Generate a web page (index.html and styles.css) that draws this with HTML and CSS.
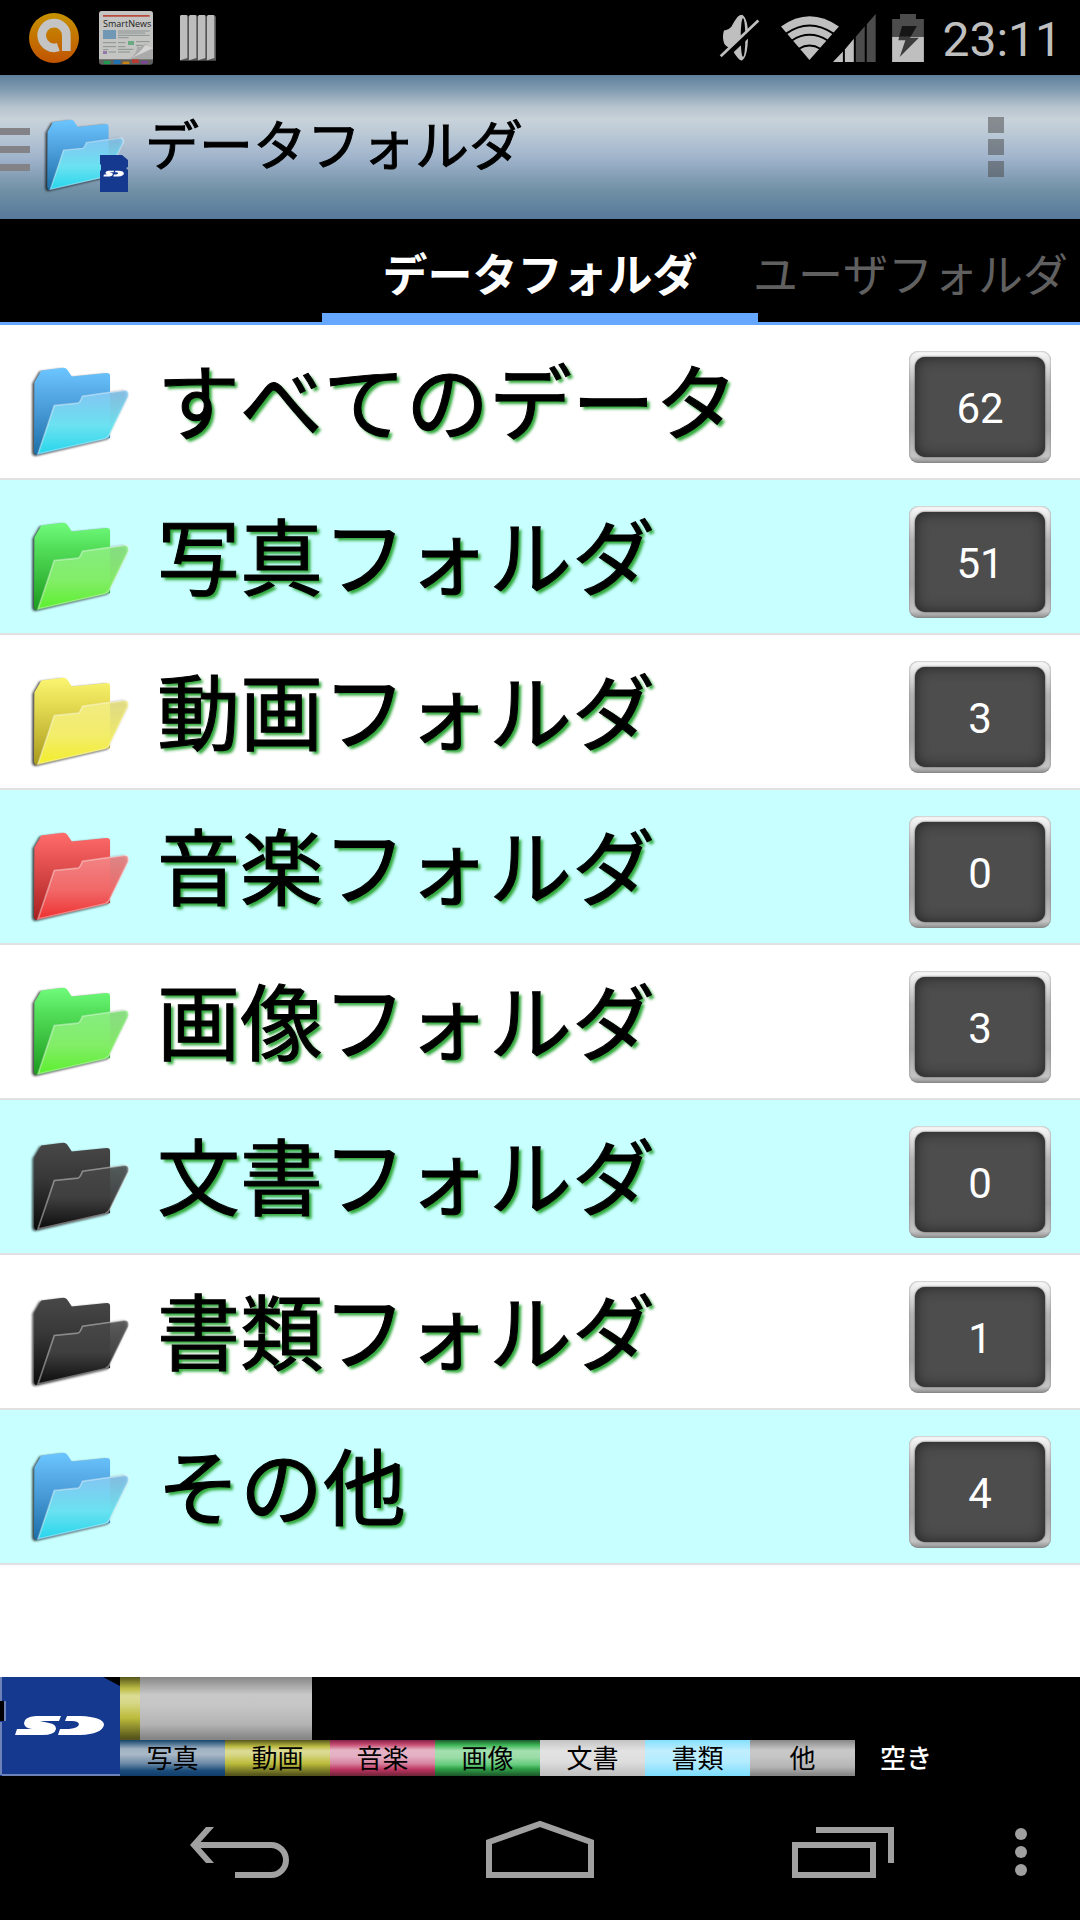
FILE: index.html
```html
<!DOCTYPE html>
<html lang="ja">
<head>
  <meta charset="UTF-8" />
  <meta name="viewport" content="width=device-width" />
  <title>データフォルダ</title>
  <link rel="stylesheet" href="styles.css">
</head>
<body>

<!-- shared shapes -->
<svg class="defs" aria-hidden="true">
  <defs>
    <linearGradient id="blueBack" x2="0" y2="1"><stop offset="0" stop-color="#6cc6ff"/><stop offset=".3" stop-color="#56aae6"/><stop offset="1" stop-color="#1d6fa8"/></linearGradient>
    <linearGradient id="blueFront" x2="0" y2="1"><stop offset="0" stop-color="#8ccaf5" stop-opacity=".85"/><stop offset=".55" stop-color="#6ee6f3" stop-opacity=".95"/><stop offset="1" stop-color="#26d6ec"/></linearGradient>
    <linearGradient id="greenBack" x2="0" y2="1"><stop offset="0" stop-color="#70fb7c"/><stop offset=".3" stop-color="#52dd58"/><stop offset="1" stop-color="#1c9a1e"/></linearGradient>
    <linearGradient id="greenFront" x2="0" y2="1"><stop offset="0" stop-color="#90f088" stop-opacity=".85"/><stop offset=".55" stop-color="#86f06a" stop-opacity=".95"/><stop offset="1" stop-color="#5cf02e"/></linearGradient>
    <linearGradient id="yellowBack" x2="0" y2="1"><stop offset="0" stop-color="#fbf570"/><stop offset=".3" stop-color="#e6dc54"/><stop offset="1" stop-color="#a89a1c"/></linearGradient>
    <linearGradient id="yellowFront" x2="0" y2="1"><stop offset="0" stop-color="#f4ee8c" stop-opacity=".85"/><stop offset=".55" stop-color="#f5f06c" stop-opacity=".95"/><stop offset="1" stop-color="#f3ee2c"/></linearGradient>
    <linearGradient id="redBack" x2="0" y2="1"><stop offset="0" stop-color="#ff6c6c"/><stop offset=".3" stop-color="#e85454"/><stop offset="1" stop-color="#a81f1f"/></linearGradient>
    <linearGradient id="redFront" x2="0" y2="1"><stop offset="0" stop-color="#f58c8c" stop-opacity=".85"/><stop offset=".55" stop-color="#f46a6a" stop-opacity=".95"/><stop offset="1" stop-color="#ee3030"/></linearGradient>
    <linearGradient id="blackBack" x2="0" y2="1"><stop offset="0" stop-color="#484848"/><stop offset=".4" stop-color="#383838"/><stop offset="1" stop-color="#0a0a0a"/></linearGradient>
    <linearGradient id="blackFront" x2="0" y2="1"><stop offset="0" stop-color="#4c4c4c" stop-opacity=".7"/><stop offset=".5" stop-color="#424242" stop-opacity=".9"/><stop offset="1" stop-color="#0c0c0c"/></linearGradient>
    <linearGradient id="avast" x2="0" y2="1"><stop offset="0" stop-color="#c69200"/><stop offset="1" stop-color="#c15300"/></linearGradient>
    <path id="back" d="M103 158L124 122L190 113Q200 113 204 122L216 140L322 129Q331 129 331 138V325L112 376Q101 376 102 360Z"/>
    <path id="front" stroke="#fff" stroke-opacity=".4" stroke-width="5" d="M114 373L163 227L234 220Q240 219 248 199L374 181Q390 180 386 200L330 314Q326 324 316 327Z"/>
    <path id="sdLogo" fill="#fff" d="M61 39H36Q24 40 24 46Q24 51 32 52H17L15 58H42Q55 58 56 52Q56 47 49 46L40 44H59ZM67 39H80Q104 40 104 48Q102 57 80 58H58L60 52H69Q79 51 79 47Q78 44 72 44H65Z"/>
  </defs>
</svg>

<div class="status">
  <svg class="avast" viewBox="87 39 150 150"><circle cx="162" cy="114" r="75" fill="url(#avast)"/><path d="M175 141A37 37 0 1 1 199 110V153" fill="none" stroke="#c4c4c4" stroke-width="26"/></svg>
  <svg class="news" viewBox="297 33 162 162">
    <rect x="297" y="33" width="162" height="161" rx="9" fill="#606060"/>
    <path d="M297 178V42Q297 33 306 33H450Q459 33 459 42V178Z" fill="#c4c4c2"/>
    <path d="M309 45H449V50H309Z" fill="#b84a3c"/>
    <text x="309" y="80" class="newsname">SmartNews</text>
    <path d="M309 90H348V117H309Z" fill="#7097b4"/>
    <path d="M354 93H449M354 99H436M354 106H449M354 113H386M309 128H348M354 128H376M408 125H449M309 140H348M354 140H376M408 136H430M354 148H400M309 149H325M326 156H348M354 156H390" stroke="#8a9492" stroke-width="3"/>
    <path d="M384 123H402V135H384Z" fill="#67aa84"/><path d="M309 153H321V162H309Z" fill="#9478a8"/>
    <path d="M388 177Q412 160 412 137Q422 147 436 131L459 148V177Z" fill="#aaa"/><path d="M388 177L459 145L436 134Q420 160 388 177Z" fill="#d4d4d4"/>
    <path d="M311 183h20v9h-20z" fill="#1e9a4c"/><path d="M341 180h20v12h-20z" fill="#2072b0"/><path d="M368 185h20v7h-20z" fill="#c98410"/><path d="M396 178h20v11h-20z" fill="#b83a30"/><path d="M423 183h20v8h-20z" fill="#7d4596"/>
  </svg>
  <svg class="bars" viewBox="540 45 108 138"><path d="M540 50l4-5h18l5 5v132h-27zM567 50l4-5h18l5 5v132h-27zM594 50l4-5h18l5 5v132h-27zM621 50l4-5h18l5 5v132h-27z" fill="#555"/><path d="M540 48l3-3h16l3 3v126l-22 7zM567 48l3-3h16l3 3v126l-22 7zM594 48l3-3h16l3 3v126l-22 7zM621 48l3-3h16l3 3v126l-22 7z" fill="#bdbdbd"/></svg>
  <span class="space"></span>
  <svg class="mute" viewBox="57 42 123 140"><path d="M73 90Q84 92 94 80Q103 62 113 50Q119 44 126 44Q145 55 144 112Q143 170 126 181Q117 183 98 151L78 137Q70 130 69 112Q69 95 73 90Z" fill="#bfbfbf"/><ellipse cx="129" cy="112" rx="7" ry="58" fill="#000"/><path d="M66 178L182 68" stroke="#000" stroke-width="16"/><path d="M78 141L98 151L80 170L62 160Z" fill="#000"/><path d="M62 168L175 61" stroke="#bfbfbf" stroke-width="8"/></svg>
  <svg class="signal" viewBox="240 36 288 145">
    <path d="M242 74Q328 12 417 74L328 175Z" fill="#bfbfbf"/>
    <path d="M256 96Q328 45 402 96M275 116Q328 82 383 116M296 141Q328 121 361 141" fill="none" stroke="#000" stroke-width="6"/>
    <path d="M399 181L429 149V181ZM435 143L462 111V181H435Z" fill="#bfbfbf"/><path d="M468 105L495 73V181H468ZM501 67L528 36V181H501Z" fill="#4c4c4c"/>
  </svg>
  <svg class="battery" viewBox="576 36 96 145"><path d="M576 51H600V36H648V51H672V105H576Z" fill="#4c4c4c"/><path d="M576 105H672V181H576Z" fill="#bfbfbf"/><path d="M606 72H651L632 105H597Z" fill="#161616"/><path d="M597 105L595 115H616L599 166L657 108H630L632 105Z" fill="#3c3c3c"/></svg>
  <time class="clock">23:11</time>
</div>

<header class="bar">
  <button class="drawer" aria-label="メニュー"><i></i><i></i><i></i></button>
  <div class="logo">
    <svg class="folder" viewBox="90 70 310 320"><use href="#back" fill="url(#blueBack)"/><use href="#front" fill="url(#blueFront)"/></svg>
    <svg class="sdbadge" viewBox="0 0 28 37"><path d="M0 0H22L28 5V12L26 13L28 15V37H0V16L1 15V10L0 9Z" fill="#15398f"/><use href="#sdLogo" transform="translate(0 4) scale(.23 .3)"/></svg>
  </div>
  <h1>データフォルダ</h1>
  <button class="more" aria-label="その他のオプション"><i></i><i></i><i></i></button>
</header>

<nav class="tabs">
  <a class="tab active" href="#data">データフォルダ</a>
  <a class="tab next" href="#user">ユーザフォルダ</a>
</nav>

<main id="data">
  <ul class="list">
    <li><a href="#all"><svg class="folder" viewBox="90 70 310 320"><use href="#back" fill="url(#blueBack)"/><use href="#front" fill="url(#blueFront)"/></svg><span class="name">すべてのデータ</span><span class="count"><b>62</b></span></a></li>
    <li><a href="#photo"><svg class="folder" viewBox="90 70 310 320"><use href="#back" fill="url(#greenBack)"/><use href="#front" fill="url(#greenFront)"/></svg><span class="name">写真フォルダ</span><span class="count"><b>51</b></span></a></li>
    <li><a href="#movie"><svg class="folder" viewBox="90 70 310 320"><use href="#back" fill="url(#yellowBack)"/><use href="#front" fill="url(#yellowFront)"/></svg><span class="name">動画フォルダ</span><span class="count"><b>3</b></span></a></li>
    <li><a href="#music"><svg class="folder" viewBox="90 70 310 320"><use href="#back" fill="url(#redBack)"/><use href="#front" fill="url(#redFront)"/></svg><span class="name">音楽フォルダ</span><span class="count"><b>0</b></span></a></li>
    <li><a href="#image"><svg class="folder" viewBox="90 70 310 320"><use href="#back" fill="url(#greenBack)"/><use href="#front" fill="url(#greenFront)"/></svg><span class="name">画像フォルダ</span><span class="count"><b>3</b></span></a></li>
    <li><a href="#text"><svg class="folder" viewBox="90 70 310 320"><use href="#back" fill="url(#blackBack)"/><use href="#front" fill="url(#blackFront)"/></svg><span class="name">文書フォルダ</span><span class="count"><b>0</b></span></a></li>
    <li><a href="#docs"><svg class="folder" viewBox="90 70 310 320"><use href="#back" fill="url(#blackBack)"/><use href="#front" fill="url(#blackFront)"/></svg><span class="name">書類フォルダ</span><span class="count"><b>1</b></span></a></li>
    <li><a href="#other"><svg class="folder" viewBox="90 70 310 320"><use href="#back" fill="url(#blueBack)"/><use href="#front" fill="url(#blueFront)"/></svg><span class="name">その他</span><span class="count"><b>4</b></span></a></li>
  </ul>
</main>

<footer class="storage">
  <svg class="sdcard" viewBox="0 0 120 99"><path d="M0 0H103L120 9V99H0V44H4V24H0Z" fill="#15398f"/><path d="M1 0V24M1 45V98M5 24V44M2 98H120" stroke="#6d82b8" stroke-width="2"/><use href="#sdLogo"/></svg>
  <div class="usage">
    <div class="gauge"><div class="movie" style="width:2.1%"></div><div class="other" style="width:17.9%"></div></div>
    <ul class="legend">
      <li class="photo">写真</li>
      <li class="movie">動画</li>
      <li class="music">音楽</li>
      <li class="image">画像</li>
      <li class="text">文書</li>
      <li class="docs">書類</li>
      <li class="other">他</li>
      <li class="free">空き</li>
    </ul>
  </div>
</footer>

<div class="navbar">
  <button class="back" aria-label="戻る"><svg viewBox="0 0 120 72"><path d="M26 15h8L18 33l16 18h-8L10 33z" fill="#a0a0a0"/><path d="M14 33H91A15 15 0 0 1 91 63H55" fill="none" stroke="#a0a0a0" stroke-width="6"/></svg></button>
  <button aria-label="ホーム"><svg viewBox="0 0 120 72"><path d="M9 63V30L60 12L111 30V63Z" fill="none" stroke="#a0a0a0" stroke-width="6"/></svg></button>
  <button aria-label="最近使ったアプリ"><svg viewBox="-3 0 120 72"><path d="M12 33H90V63H12ZM33 18H108V51" fill="none" stroke="#a0a0a0" stroke-width="6"/></svg></button>
  <button class="dots" aria-label="メニュー"><svg viewBox="0 0 16 72"><g fill="#a0a0a0"><circle cx="8" cy="22" r="6"/><circle cx="8" cy="40" r="6"/><circle cx="8" cy="58" r="6"/></g></svg></button>
</div>

</body>
</html>
```
FILE: styles.css
```css
* { box-sizing: border-box; }
body { margin: 0; min-height: 100vh; display: flex; flex-direction: column; background: #fff; color: #000; font-family: Roboto, "Noto Sans CJK JP", sans-serif; font-kerning: none; }
ul { list-style: none; margin: 0; padding: 0; }
a { color: inherit; text-decoration: none; }
button { background: none; border: none; padding: 0; margin: 0; cursor: pointer; }
svg { display: block; flex: none; }
.defs { position: absolute; width: 0; height: 0; }

/* status bar */
.status { display: flex; align-items: center; height: 75px; padding: 0 18px 0 29px; background: #000; }
.status .space { flex: 1; }
.avast { width: 50px; height: 50px; margin-right: 20px; }
.news { width: 54px; height: 54px; margin-right: 27px; }
.newsname { font-family: "Open Sans", sans-serif; font-size: 27px; fill: #222; }
.bars { width: 36px; height: 46px; }
.mute { width: 41px; height: 47px; margin-right: 20px; }
.signal { width: 96px; height: 48px; margin-right: 16px; }
.battery { width: 32px; height: 48px; margin-right: 18px; }
.clock { color: #bfbfbf; font-size: 48px; line-height: 56px; padding-top: 4px; }

/* action bar */
.bar { display: flex; align-items: center; height: 144px; background: linear-gradient(#5f809c 0%, #7f9bb0 10%, #b6c3ce 22%, #c8d2da 31%, #bccad6 40%, #9fb3cb 58%, #7090a5 80%, #57799b 100%); }
.drawer { display: grid; gap: 11px; width: 30px; margin-right: 14px; padding-top: 4px; }
.drawer i { height: 7px; background: #838387; }
.logo { position: relative; padding-top: 8px; width: 101px; }
.logo .folder { width: 83px; height: 86px; }
.sdbadge { position: absolute; left: 56px; bottom: 2px; width: 28px; height: 37px; }
.bar h1 { flex: 1; margin: 0; padding-top: 2px; font-size: 54px; line-height: 78px; font-weight: 400; -webkit-text-stroke: 1px; }
.more { display: grid; gap: 6px; margin-right: 76px; }
.more i { width: 16px; height: 16px; background: rgba(70, 70, 70, .5); }

/* tabs */
.tabs { display: grid; grid-template-columns: minmax(0, 1fr) auto minmax(0, 1fr); height: 106px; background: #000; border-bottom: 3px solid #66a8ff; font-size: 45px; line-height: 66px; }
.tab { padding-top: 25px; white-space: nowrap; }
.active { grid-column: 2; padding-left: 60px; padding-right: 60px; color: #fff; font-weight: bold; border-bottom: 9px solid #66a8ff; }
.next { margin-left: -6px; color: #606060; text-align: right; padding-right: 12px; }

/* folder list */
main { flex: 1; }
.list a { display: flex; align-items: center; height: 155px; padding: 10px 29px 0 30px; border-bottom: 2px solid #e1e1e1; }
.list li:nth-child(even) { background: #c8ffff; }
.folder { width: 103px; height: 107px; filter: drop-shadow(-2px 1px 1px rgba(0, 0, 0, .7)); }
.name { flex: 1; margin-left: 24px; padding-bottom: 2px; font-size: 83px; line-height: 120px; font-weight: 400; -webkit-text-stroke: 1px; text-shadow: 3px 3px 3px #2fa83a; white-space: nowrap; }
.count { width: 142px; height: 112px; padding: 6px; border-radius: 9px; background: linear-gradient(#fafafa, #b4b4b4 30%, #a4a4a4 70%, #c4c4c4 94%, #8c8c8c); box-shadow: inset 0 0 2px #777; }
.count b { display: block; border-radius: 10px; background: #4d4d4d; box-shadow: inset 0 0 14px #222, 0 0 2px #333; color: #fff; font-size: 42px; font-weight: 400; line-height: 100px; padding-top: 2px; height: 100px; text-align: center; }

/* sd card usage */
.storage { display: flex; height: 99px; background: #000; }
.sdcard { width: 120px; height: 99px; }
.usage { flex: 1; }
.gauge { display: flex; height: 63px; }
.legend { display: flex; font-size: 26px; line-height: 38px; height: 36px; }
.legend li { width: 105px; text-align: center; }
.photo { background: linear-gradient(#16456c, #9fb3c4 25%, #a9b8c6 40%, #6d8aa8 65%, #1b4c7a 85%, #0f3d6c); }
.movie { background: linear-gradient(#55551c, #bcbc44 18%, #dcdc96 30%, #d8d88a 40%, #bcbc3c 65%, #55551c 97%); }
.music { background: linear-gradient(#84204a, #c4486e 12%, #e6b4c6 28%, #e4b0c4 45%, #d884a0 65%, #bc3460 82%, #6c2438); }
.image { background: linear-gradient(#1c5a2c, #3cb454 14%, #a4e0b0 30%, #9cdca8 48%, #64cc7c 68%, #30a048 80%, #1c5428); }
.text { background: linear-gradient(#c4c4c4, #e2e2e2 30%, #dedede 60%, #bebebe); }
.docs { background: linear-gradient(#84e0fc, #c0eeff 30%, #b4ecff 60%, #7cdcfc); }
.other { background: linear-gradient(#888, #c8c8c8 28%, #c6c6c6 45%, #b4b4b4 75%, #868686 97%); }
.legend .free { width: auto; margin-left: 25px; color: #fff; font-weight: 500; }

/* system navigation */
.navbar { display: grid; grid-template-columns: 300fr 300fr 300fr 62fr; height: 144px; padding: 0 28px 0 90px; background: #000; }
.navbar button { display: flex; align-items: center; justify-content: center; }
.navbar svg { width: 120px; height: 72px; }
.navbar .dots svg { width: 16px; }
```
